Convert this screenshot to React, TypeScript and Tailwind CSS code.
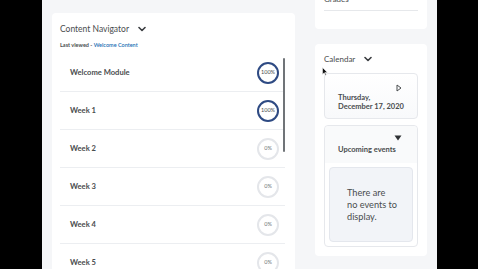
import React from "react";

const rows = [
  { name: "Welcome Module", pct: 100 },
  { name: "Week 1", pct: 100 },
  { name: "Week 2", pct: 0 },
  { name: "Week 3", pct: 0 },
  { name: "Week 4", pct: 0 },
  { name: "Week 5", pct: 0 },
];

function Chevron() {
  return (
    <svg width="8" height="6" viewBox="0 0 8 6" className="ml-[9px]">
      <path d="M1 1.5 L4 4.5 L7 1.5" fill="none" stroke="#3a3d40" strokeWidth="1.6" strokeLinecap="round" strokeLinejoin="round" />
    </svg>
  );
}

function Circle({ pct }: { pct: number }) {
  const done = pct === 100;
  return (
    <div
      className={
        done
          ? "w-[22px] h-[22px] rounded-full border-[2px] border-[#2e4a83] flex items-center justify-center text-[5.5px] text-[#494c4e]"
          : "w-[22px] h-[22px] rounded-full border-[2px] border-[#e4e6ea] flex items-center justify-center text-[5.5px] text-[#6e7376]"
      }
    >
      {pct}%
    </div>
  );
}

export default function App() {
  return (
    <div
      className="w-[478px] h-[269px] overflow-hidden flex bg-black"
      style={{ fontFamily: "Lato, 'Noto Sans', sans-serif" }}
    >
      <div className="w-[42px] shrink-0 bg-black" />
      <div className="w-[395px] shrink-0 bg-[#f5f6f8] flex items-start pl-[10px] pr-[10px] gap-[20px] relative">
        {/* Left card */}
        <div className="w-[243px] mt-[13px] h-[300px] bg-white rounded-[4px] pl-[8px] pr-[10px]">
          <div className="flex items-center h-[14px] mt-[9px] text-[8.5px] text-[#494c4e]">
            Content Navigator
            <Chevron />
          </div>
          <div className="mt-[4px] h-[10px] flex items-center text-[5.5px] font-bold text-[#494c4e]">
            Last viewed -&nbsp;<span className="text-[#1c6fb4] font-semibold">Welcome Content</span>
          </div>
          <div className="relative mt-[4px]">
            {rows.map((r) => (
              <div
                key={r.name}
                className="h-[38px] flex items-center justify-between pl-[10px] pr-[6px] border-b border-[#eceef1]"
              >
                <span className="text-[7.6px] font-bold text-[#494c4e]">{r.name}</span>
                <Circle pct={r.pct} />
              </div>
            ))}
            <div className="absolute right-0 top-[4px] w-[2px] h-[94px] bg-[#707478] rounded-full" />
          </div>
        </div>

        {/* Right column */}
        <div className="w-[112px] flex flex-col gap-[15px] mt-[-20px]">
          <div className="bg-white rounded-[4px] px-[9px] pt-[13px] pb-[18px]">
            <div className="h-[12px] flex items-center text-[8px] text-[#494c4e]">Grades</div>
            <div className="mt-[5px] h-px bg-[#e6e8eb]" />
          </div>

          <div className="bg-white rounded-[4px] px-[9px] pt-[9px] pb-[9px] h-[212px]">
            <div className="flex items-center h-[12px] text-[8px] text-[#494c4e]">
              Calendar
              <Chevron />
            </div>
            <div className="mt-[8px] h-[46px] rounded-[4px] border border-[#e6e8ec] bg-gradient-to-b from-white to-[#f8f9fb] relative pl-[13px] pt-[20px] text-[7.5px] font-bold text-[#494c4e] leading-[8.5px]">
              <svg width="6" height="8" viewBox="0 0 6 8" className="absolute left-[71px] top-[10px]">
                <path d="M1 1 L5 4 L1 7 Z" fill="none" stroke="#494c4e" strokeWidth="1" strokeLinejoin="round" />
              </svg>
              <div>Thursday,</div>
              <div>December 17, 2020</div>
            </div>
            <div className="mt-[6px] h-[122px] rounded-[4px] border border-[#e6e8ec] bg-white flex flex-col">
              <div className="h-[37px] bg-[#f9fafb] relative pl-[13px] pt-[19px] text-[7.5px] font-bold text-[#494c4e] leading-[9px] rounded-t-[4px]">
                <svg width="8" height="6" viewBox="0 0 8 6" className="absolute left-[69px] top-[9px]">
                  <path d="M0.5 0.5 L7.5 0.5 L4 5.5 Z" fill="#2f3235" />
                </svg>
                Upcoming events
              </div>
              <div className="mx-[4px] mt-[4px] h-[75px] rounded-[4px] border border-[#e4e7ed] bg-[#f2f4f8] pl-[17px] pt-[19px] text-[9.2px] leading-[12px] text-[#494c4e]">
                <div>There are</div>
                <div>no events to</div>
                <div>display.</div>
              </div>
            </div>
          </div>
        </div>

        {/* mouse cursor */}
        <svg width="6" height="9" viewBox="0 0 6 9" className="absolute left-[280px] top-[67px]">
          <path d="M0.5 0.5 L0.5 7.5 L2.2 5.8 L3.4 8.3 L4.3 7.9 L3.1 5.4 L5.4 5.4 Z" fill="#111" stroke="#fff" strokeWidth="0.5" />
        </svg>
      </div>
      <div className="flex-1 bg-black" />
    </div>
  );
}
